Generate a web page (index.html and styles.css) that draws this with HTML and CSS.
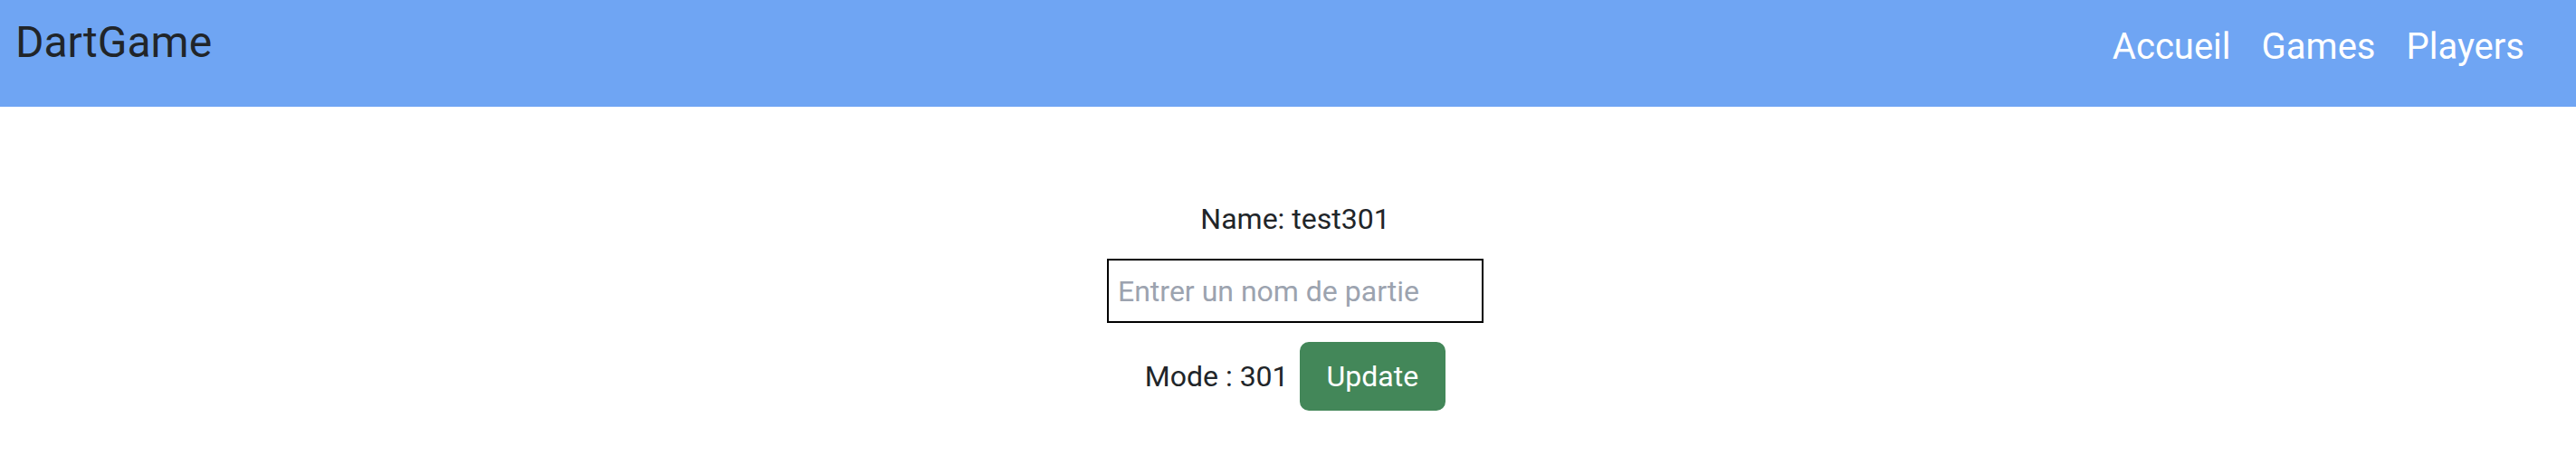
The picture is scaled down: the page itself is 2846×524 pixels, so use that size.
FILE: index.html
```html
<!DOCTYPE html>
<html lang="fr">
<head>
<meta charset="utf-8">
<title>DartGame</title>
<link rel="stylesheet" href="styles.css">
</head>
<body>
<header class="navbar">
  <a class="brand" href="#">DartGame</a>
  <nav class="nav">
    <a class="nav-link" href="#">Accueil</a>
    <a class="nav-link" href="#">Games</a>
    <a class="nav-link" href="#">Players</a>
  </nav>
</header>
<main class="content">
  <p class="name">Name: test301</p>
  <input class="name-input" type="text" placeholder="Entrer un nom de partie">
  <div class="mode-row">
    <span class="mode">Mode : 301</span>
    <button class="btn-update" type="button">Update</button>
  </div>
</main>
</body>
</html>
```

FILE: styles.css
```css
html, body {
  margin: 0;
  padding: 0;
  background: #ffffff;
}

body {
  font-family: "Roboto", "Inter", sans-serif;
  color: #212529;
}

.navbar {
  height: 118px;
  box-sizing: border-box;
  background: #6fa5f3;
  display: flex;
  justify-content: space-between;
  align-items: flex-start;
  padding: 0 40px 0 17px;
}

.brand {
  font-size: 48px;
  line-height: 72px;
  margin-top: 11px;
  color: #212529;
  text-decoration: none;
}

.nav {
  display: flex;
  margin-top: 22px;
}

.nav-link {
  font-size: 40px;
  line-height: 60px;
  padding: 0 17px;
  color: #ffffff;
  text-decoration: none;
}

.content {
  display: flex;
  flex-direction: column;
  align-items: center;
  padding: 100px 0 0 16px;
}

.name {
  margin: 0;
  font-size: 32px;
  line-height: 48px;
}

.name-input {
  margin-top: 20px;
  width: 416px;
  height: 71px;
  box-sizing: border-box;
  border: 2px solid #000000;
  border-radius: 0;
  padding: 0 10px;
  font-family: inherit;
  font-size: 32px;
  color: #212529;
  outline: none;
}

.name-input::placeholder {
  color: #9ca3af;
}

.mode-row {
  margin-top: 21px;
  display: flex;
  align-items: baseline;
  gap: 12px;
}

.mode {
  font-size: 32px;
  line-height: 48px;
}

.btn-update {
  font-family: inherit;
  font-size: 32px;
  line-height: 48px;
  padding: 12px 28px;
  border: 2px solid #438759;
  border-radius: 10px;
  background: #438759;
  color: #ffffff;
  cursor: pointer;
}
```
